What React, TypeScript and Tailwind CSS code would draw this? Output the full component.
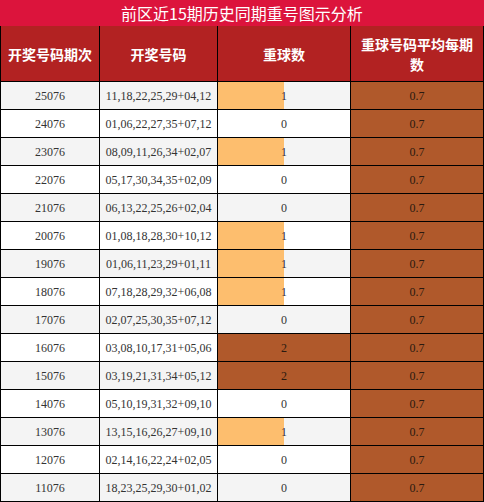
import React from "react"

interface Row {
    issue: string
    numbers: string
    repeat: number
}

const rows: Row[] = [
    { issue: "25076", numbers: "11,18,22,25,29+04,12", repeat: 1 },
    { issue: "24076", numbers: "01,06,22,27,35+07,12", repeat: 0 },
    { issue: "23076", numbers: "08,09,11,26,34+02,07", repeat: 1 },
    { issue: "22076", numbers: "05,17,30,34,35+02,09", repeat: 0 },
    { issue: "21076", numbers: "06,13,22,25,26+02,04", repeat: 0 },
    { issue: "20076", numbers: "01,08,18,28,30+10,12", repeat: 1 },
    { issue: "19076", numbers: "01,06,11,23,29+01,11", repeat: 1 },
    { issue: "18076", numbers: "07,18,28,29,32+06,08", repeat: 1 },
    { issue: "17076", numbers: "02,07,25,30,35+07,12", repeat: 0 },
    { issue: "16076", numbers: "03,08,10,17,31+05,06", repeat: 2 },
    { issue: "15076", numbers: "03,19,21,31,34+05,12", repeat: 2 },
    { issue: "14076", numbers: "05,10,19,31,32+09,10", repeat: 0 },
    { issue: "13076", numbers: "13,15,16,26,27+09,10", repeat: 1 },
    { issue: "12076", numbers: "02,14,16,22,24+02,05", repeat: 0 },
    { issue: "11076", numbers: "18,23,25,29,30+01,02", repeat: 0 },
]

const cjk = { fontFamily: '"Noto Sans CJK SC", "Noto Sans", sans-serif' }
const serif = { fontFamily: '"Liberation Serif", "Noto Sans CJK SC", serif' }

export default function App() {
    return (
        <div className="w-[484px] bg-white">
            <div
                className="h-[26px] bg-[#dc143c] text-white text-[16px] leading-[26px] text-center"
                style={cjk}
            >
                前区近15期历史同期重号图示分析
            </div>

            <div className="border-l border-black">
                <div className="flex h-[56px] bg-[#b22222] border-b border-black text-white font-bold text-[14px] leading-[20px]" style={cjk}>
                    <div className="w-[99px] border-r border-black flex items-center justify-center">开奖号码期次</div>
                    <div className="w-[118px] border-r border-black flex items-center justify-center">开奖号码</div>
                    <div className="w-[133px] border-r border-black flex items-center justify-center">重球数</div>
                    <div className="w-[133px] border-r border-black flex items-center justify-center text-center px-[6px]">重球号码平均每期数</div>
                </div>

                {rows.map((row, i) => {
                    const bg = i % 2 === 0 ? "bg-[#f4f4f4]" : "bg-white"
                    return (
                        <div key={row.issue} className={`flex h-[28px] border-b border-black text-[12px] text-[#333] ${bg}`} style={serif}>
                            <div className="w-[99px] border-r border-black flex items-center justify-center">{row.issue}</div>
                            <div className="w-[118px] border-r border-black flex items-center justify-center">{row.numbers}</div>
                            <div className={`relative w-[133px] border-r border-black flex items-center justify-center ${row.repeat === 2 ? "bg-[#b0592b] text-[#2a1a10]" : ""}`}>
                                {row.repeat === 1 && (
                                    <div className="absolute left-0 top-0 bottom-0 w-[66px] bg-[#fdbe6e]" />
                                )}
                                <span className="relative">{row.repeat}</span>
                            </div>
                            <div className="w-[133px] border-r border-black flex items-center justify-center bg-[#b0592b] text-[#2a1a10]">0.7</div>
                        </div>
                    )
                })}
            </div>
        </div>
    )
}
